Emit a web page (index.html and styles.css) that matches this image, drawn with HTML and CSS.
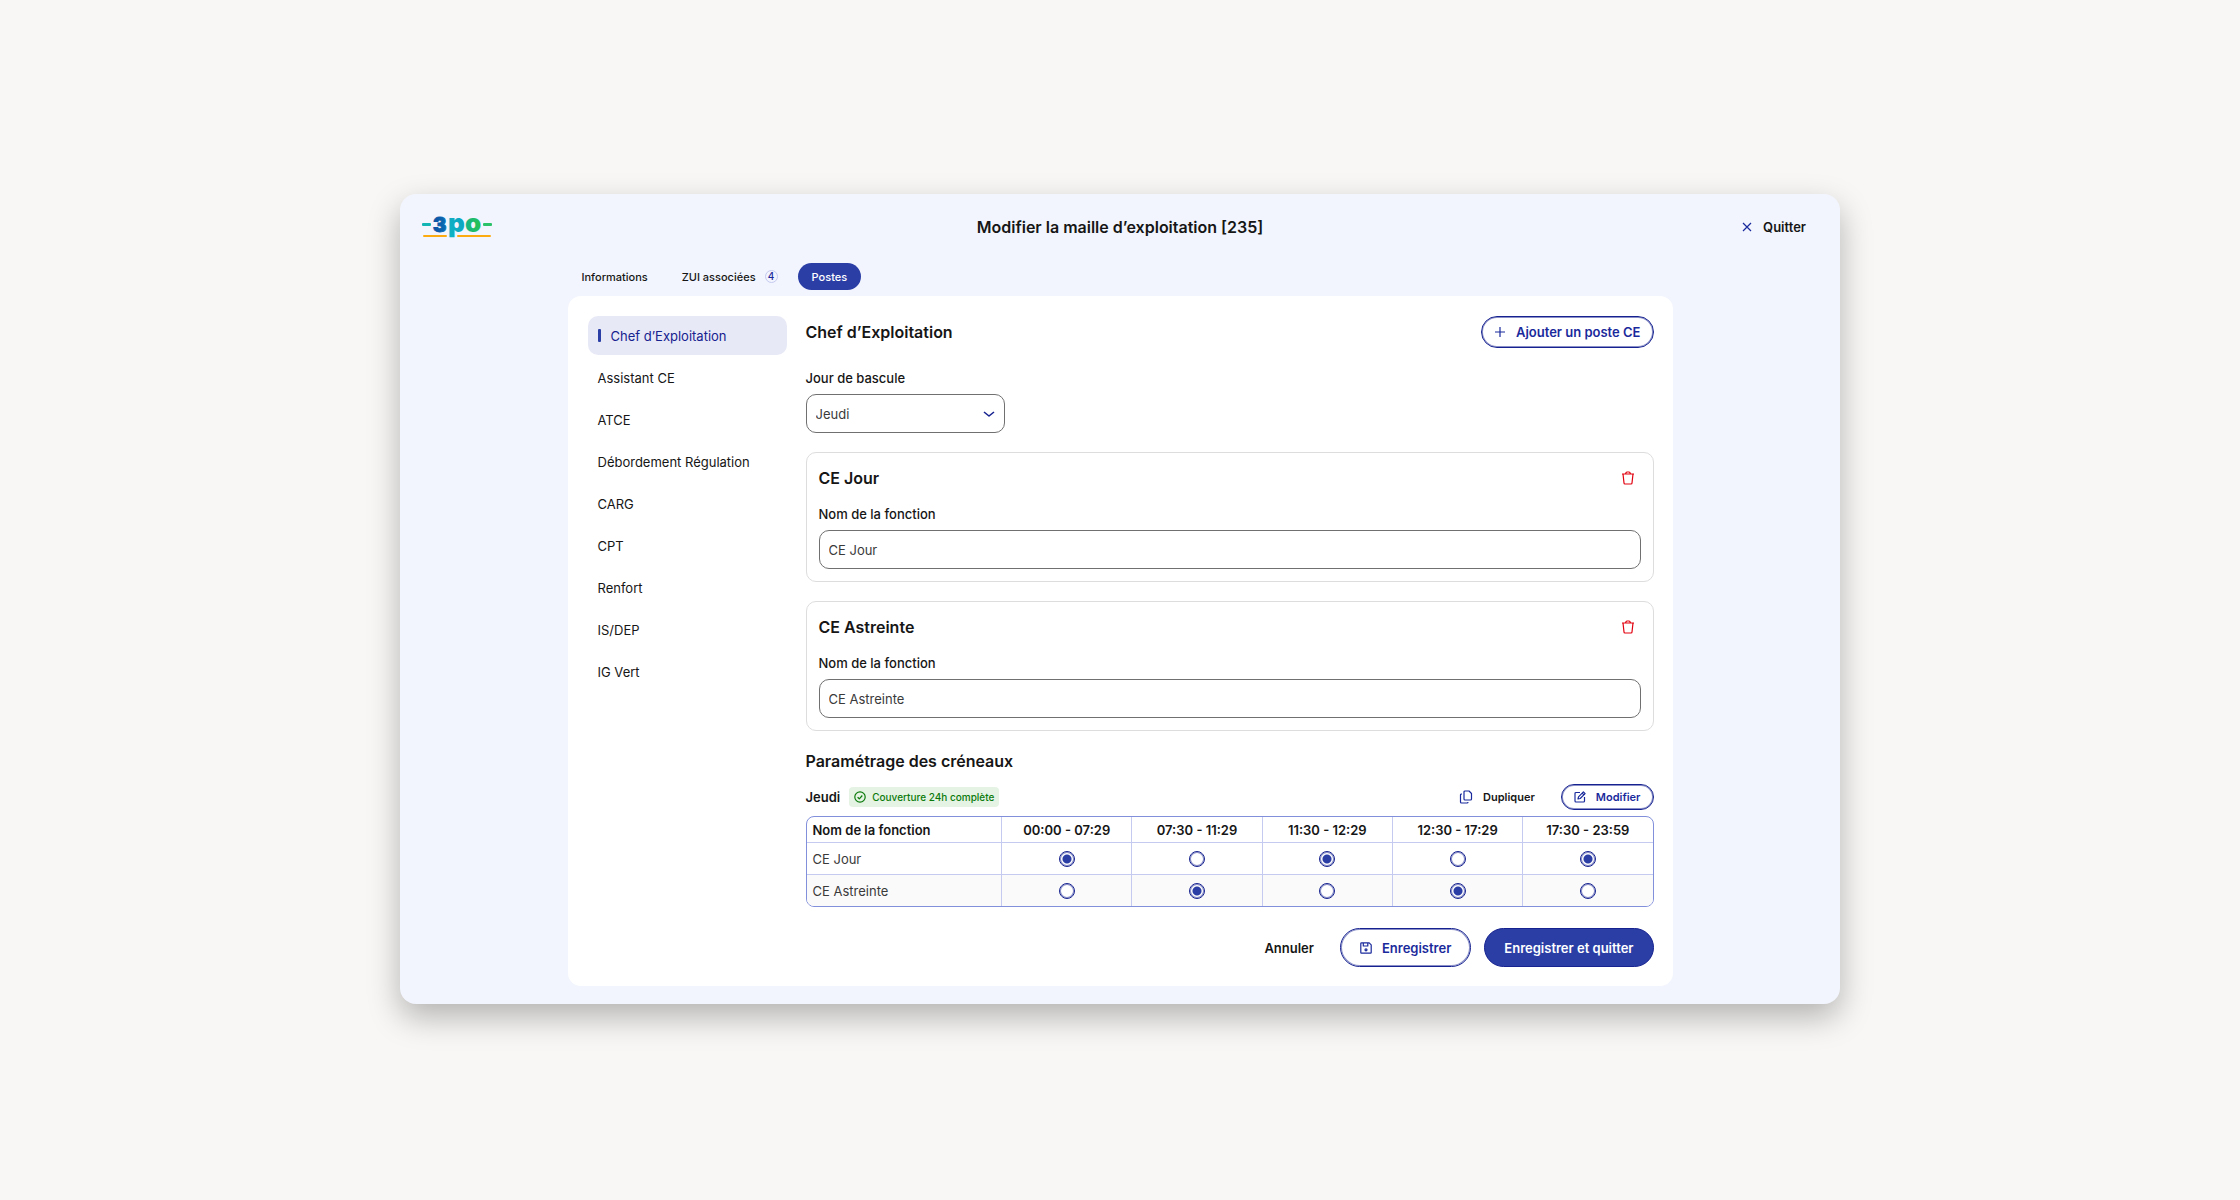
FILE: index.html
```html
<!DOCTYPE html>
<html lang="fr">
<head>
    <meta charset="UTF-8">
    <meta name="viewport" content="width=device-width, initial-scale=1.0">
    <title>Modifier la maille d’exploitation</title>
    <link rel="stylesheet" href="styles.css">
</head>
<body>
    <div class="window">
        <header class="topbar">
            <a class="logo" href="#" aria-label="3PO">
                <svg width="72" height="40" viewBox="0 -8 72 40">
                    <defs>
                        <linearGradient id="logoBlue" x1="0" x2="1" y1="0" y2="0"><stop offset="0" stop-color="#0b4da2"/><stop offset="1" stop-color="#0a6fb5"/></linearGradient>
                        <linearGradient id="logoTeal" x1="0" x2="1" y1="1" y2="0"><stop offset="0" stop-color="#12b5c4"/><stop offset="1" stop-color="#0a9fc0"/></linearGradient>
                        <linearGradient id="logoGreen" x1="0" x2="1" y1="0" y2="0"><stop offset="0" stop-color="#12b48c"/><stop offset="1" stop-color="#2bc24e"/></linearGradient>
                    </defs>
                    <rect x="1" y="8" width="9" height="3" rx="1" fill="#12b5b4"/>
                    <text class="logo-digit" x="12" y="17" fill="url(#logoBlue)" stroke="url(#logoBlue)">3</text>
                    <text class="logo-letter" x="27" y="17" fill="url(#logoTeal)">p</text>
                    <text class="logo-letter" x="44" y="17" fill="url(#logoGreen)">o</text>
                    <rect x="62" y="8" width="9" height="3" rx="1" fill="#2bc26a"/>
                    <rect x="2" y="20" width="24" height="2" rx="1" fill="#fcab10"/>
                    <rect x="36" y="20" width="34" height="2" rx="1" fill="#fcab10"/>
                </svg>
            </a>
            <h1>Modifier la maille d’exploitation [235]</h1>
            <button class="btn-text quit" type="button">
                <svg class="icon" width="12" height="12" viewBox="0 0 12 12"><path d="M2 2l8 8M10 2l-8 8"/></svg>
                Quitter
            </button>
        </header>

        <div class="content">
            <nav class="tabs">
                <a href="#">Informations</a>
                <a href="#">ZUI associées <span class="count">4</span></a>
                <a class="active" href="#">Postes</a>
            </nav>

            <div class="panel">
                <nav class="sidebar">
                    <a class="active" href="#">Chef d’Exploitation</a>
                    <a href="#">Assistant CE</a>
                    <a href="#">ATCE</a>
                    <a href="#">Débordement Régulation</a>
                    <a href="#">CARG</a>
                    <a href="#">CPT</a>
                    <a href="#">Renfort</a>
                    <a href="#">IS/DEP</a>
                    <a href="#">IG Vert</a>
                </nav>

                <main class="main">
                    <div class="main-header">
                        <h2>Chef d’Exploitation</h2>
                        <button class="btn-outline btn-add" type="button">
                            <svg class="icon" width="12" height="12" viewBox="0 0 12 12"><path d="M6 1v10M1 6h10"/></svg>
                            Ajouter un poste CE
                        </button>
                    </div>

                    <div class="field">
                        <label for="jour">Jour de bascule</label>
                        <div class="select">
                            <select id="jour">
                                <option>Lundi</option>
                                <option>Mardi</option>
                                <option>Mercredi</option>
                                <option selected>Jeudi</option>
                                <option>Vendredi</option>
                                <option>Samedi</option>
                                <option>Dimanche</option>
                            </select>
                            <svg class="icon chevron" width="12" height="12" viewBox="0 0 12 12"><path d="M1 4l5 4 5-4"/></svg>
                        </div>
                    </div>

                    <section class="card">
                        <div class="card-header">
                            <h2>CE Jour</h2>
                            <button class="btn-delete" type="button" aria-label="Supprimer CE Jour">
                                <svg class="icon" width="14" height="16" viewBox="0 0 14 16"><path d="M1 4h12M4.500 4q.5-2 1.500-2h2q1 0 1.500 2M2 4l1 9q0 1 1 1h6q1 0 1-1l1-9"/></svg>
                            </button>
                        </div>
                        <div class="field">
                            <label for="fonction-jour">Nom de la fonction</label>
                            <input id="fonction-jour" type="text" value="CE Jour">
                        </div>
                    </section>

                    <section class="card">
                        <div class="card-header">
                            <h2>CE Astreinte</h2>
                            <button class="btn-delete" type="button" aria-label="Supprimer CE Astreinte">
                                <svg class="icon" width="14" height="16" viewBox="0 0 14 16"><path d="M1 4h12M4.500 4q.5-2 1.500-2h2q1 0 1.500 2M2 4l1 9q0 1 1 1h6q1 0 1-1l1-9"/></svg>
                            </button>
                        </div>
                        <div class="field">
                            <label for="fonction-astreinte">Nom de la fonction</label>
                            <input id="fonction-astreinte" type="text" value="CE Astreinte">
                        </div>
                    </section>

                    <section class="slots">
                        <h2>Paramétrage des créneaux</h2>
                        <div class="slots-header">
                            <h3>Jeudi</h3>
                            <span class="badge">
                                <svg class="icon" width="12" height="12" viewBox="0 0 12 12"><circle cx="6" cy="6" r="5.2"/><path d="M3.600 6.200l1.700 1.600 3-3.300"/></svg>
                                Couverture 24h complète
                            </span>
                            <button class="btn-text btn-small" type="button">
                                <svg class="icon" width="14" height="14" viewBox="0 0 14 14"><path d="M6 1h4l2.500 2.500V9a1 1 0 0 1-1 1H6a1 1 0 0 1-1-1V2a1 1 0 0 1 1-1zM3 4h-.5a1 1 0 0 0-1 1v7a1 1 0 0 0 1 1H8a1 1 0 0 0 1-1"/></svg>
                                Dupliquer
                            </button>
                            <button class="btn-outline btn-small" type="button">
                                <svg class="icon" width="12" height="12" viewBox="0 0 12 12"><path d="M6 1.500H2a1 1 0 0 0-1 1V10a1 1 0 0 0 1 1h7.500a1 1 0 0 0 1-1V6M4 8l.5-2.200L9.400.9l1.700 1.700L6.200 7.500zM8.200 2.100l1.700 1.700"/></svg>
                                Modifier
                            </button>
                        </div>

                        <table class="grid">
                            <thead>
                                <tr>
                                    <th scope="col">Nom de la fonction</th>
                                    <th scope="col">00:00 - 07:29</th>
                                    <th scope="col">07:30 - 11:29</th>
                                    <th scope="col">11:30 - 12:29</th>
                                    <th scope="col">12:30 - 17:29</th>
                                    <th scope="col">17:30 - 23:59</th>
                                </tr>
                            </thead>
                            <tbody>
                                <tr>
                                    <td>CE Jour</td>
                                    <td><input type="radio" name="slot1" aria-label="CE Jour 00:00 - 07:29" checked></td>
                                    <td><input type="radio" name="slot2" aria-label="CE Jour 07:30 - 11:29"></td>
                                    <td><input type="radio" name="slot3" aria-label="CE Jour 11:30 - 12:29" checked></td>
                                    <td><input type="radio" name="slot4" aria-label="CE Jour 12:30 - 17:29"></td>
                                    <td><input type="radio" name="slot5" aria-label="CE Jour 17:30 - 23:59" checked></td>
                                </tr>
                                <tr>
                                    <td>CE Astreinte</td>
                                    <td><input type="radio" name="slot1" aria-label="CE Astreinte 00:00 - 07:29"></td>
                                    <td><input type="radio" name="slot2" aria-label="CE Astreinte 07:30 - 11:29" checked></td>
                                    <td><input type="radio" name="slot3" aria-label="CE Astreinte 11:30 - 12:29"></td>
                                    <td><input type="radio" name="slot4" aria-label="CE Astreinte 12:30 - 17:29" checked></td>
                                    <td><input type="radio" name="slot5" aria-label="CE Astreinte 17:30 - 23:59"></td>
                                </tr>
                            </tbody>
                        </table>
                    </section>

                    <div class="actions">
                        <button class="btn-text" type="button">Annuler</button>
                        <button class="btn-outline btn-large" type="button">
                            <svg class="icon" width="12" height="12" viewBox="0 0 12 12"><path d="M1.500.8h7.700l2 2v7.700a.7.7 0 0 1-.7.7h-9a.7.7 0 0 1-.7-.7v-9a.7.7 0 0 1 .7-.7zM3.300 1v3h4.500V1"/><circle cx="6" cy="7.800" r="1"/></svg>
                            Enregistrer
                        </button>
                        <button class="btn-primary btn-large" type="button">Enregistrer et quitter</button>
                    </div>
                </main>
            </div>
        </div>
    </div>
</body>
</html>
```
FILE: styles.css
```css
* {
    box-sizing: border-box;
}
body {
    font-family: Inter, "Liberation Sans", sans-serif;
    font-size: 13px;
    line-height: 16px;
    color: #161616;
    background-color: #f8f7f5;
    margin: 0;
    padding: 24px 24px 26px;
    min-height: 100vh;
    display: flex;
    align-items: center;
    justify-content: center;
}
h1, h2, h3 {
    margin: 0;
    font-size: 16px;
    line-height: 20px;
    font-weight: 600;
}
a {
    color: inherit;
    text-decoration: none;
}
button, input, select {
    font: inherit;
    color: inherit;
    margin: 0;
}
button {
    display: inline-flex;
    align-items: center;
    justify-content: center;
    cursor: pointer;
}
.icon {
    flex: none;
    fill: none;
    stroke: currentColor;
    stroke-width: 1.2;
    stroke-linejoin: round;
}
.window {
    width: 100%;
    max-width: 1440px;
    padding-bottom: 18px;
    background-color: #f2f5fd;
    border-radius: 16px;
    box-shadow: 0 13px 32px rgba(0, 0, 0, 0.28);
}

/* top bar */
.topbar {
    display: grid;
    grid-template-columns: 1fr auto 1fr;
    align-items: center;
    height: 66px;
    padding: 0 21px;
}
.logo svg {
    display: block;
}
.logo-digit, .logo-letter {
    font-weight: 900;
    font-size: 20px;
}
.logo-letter {
    font-size: 26px;
}
.btn-text {
    gap: 10px;
    padding: 0;
    border: none;
    background: none;
    font-weight: 600;
}
.btn-text .icon {
    color: #1a2a9c;
}
.quit {
    justify-self: end;
    padding-right: 13px;
}

/* tabs */
.content {
    max-width: 1105px;
    margin: 0 auto;
}
.tabs {
    display: flex;
    gap: 6px;
    margin-top: 3px;
    font-size: 11px;
    font-weight: 500;
}
.tabs a {
    display: flex;
    align-items: center;
    gap: 9px;
    height: 27px;
    padding: 0 14px;
    border-radius: 14px;
}
.tabs .active {
    background-color: #2b3ea6;
    color: #fff;
}
.count {
    width: 13px;
    height: 13px;
    line-height: 11px;
    border: 1px solid #c5caf0;
    border-radius: 50%;
    font-size: 10px;
    text-align: center;
    color: #1a2a9c;
}

/* panel */
.panel {
    display: flex;
    gap: 19px;
    margin-top: 6px;
    padding: 20px 19px 19px 20px;
    background-color: #fff;
    border-radius: 13px;
}
.sidebar {
    flex: none;
    width: 199px;
    display: flex;
    flex-direction: column;
    gap: 3px;
}
.sidebar a {
    display: flex;
    align-items: center;
    gap: 10px;
    height: 39px;
    padding: 0 10px;
    border-radius: 10px;
}
.sidebar .active {
    background-color: #e7e9f6;
    color: #16228f;
}
.sidebar .active::before {
    content: "";
    width: 3px;
    height: 13px;
    border-radius: 1px;
    background-color: #2b3ea6;
}
.main {
    flex: 1;
    min-width: 0;
}
.main-header, .card-header {
    display: flex;
    align-items: center;
    justify-content: space-between;
}
.main-header {
    margin-bottom: 22px;
}

/* buttons */
.btn-outline, .btn-primary {
    gap: 10px;
    border: 1px solid #16228f;
    border-radius: 20px;
    box-shadow: inset 0 0 0 1px rgba(22, 34, 143, 0.5);
    background-color: #fff;
    color: #1a2a9c;
    font-weight: 600;
}
.btn-primary {
    background-color: #2b3ea6;
    color: #fff;
    box-shadow: none;
}
.btn-add {
    height: 32px;
    padding: 0 12px;
}
.btn-large {
    height: 39px;
    padding: 0 19px;
}
.btn-small {
    height: 26px;
    font-size: 11px;
}
.btn-outline.btn-small {
    padding: 0 12px;
}
.btn-delete {
    width: 26px;
    height: 26px;
    padding: 0;
    border: none;
    background: none;
    color: #e1000f;
}

/* form fields */
.field label {
    display: block;
    margin-bottom: 8px;
    font-weight: 500;
}
.field input, .field select {
    display: block;
    width: 100%;
    height: 39px;
    padding: 0 9px;
    border: 1px solid #707070;
    border-radius: 10px;
    background-color: #fff;
    color: #3a3a3a;
    appearance: none;
}
.select {
    position: relative;
    width: 199px;
}
.chevron {
    position: absolute;
    right: 10px;
    top: 14px;
    color: #16228f;
    stroke-width: 1.6;
    pointer-events: none;
}
.card {
    margin-top: 19px;
    padding: 12px;
    border: 1px solid #dddddd;
    border-radius: 10px;
}
.card-header {
    margin-bottom: 15px;
}

/* time slots */
.slots {
    margin-top: 20px;
}
.slots-header {
    display: flex;
    align-items: center;
    margin: 13px 0 6px;
}
.slots-header h3 {
    font-size: 13px;
}
.slots-header .btn-text {
    margin: 0 26px 0 auto;
}
.badge {
    display: flex;
    align-items: center;
    gap: 6px;
    height: 20px;
    margin-left: 9px;
    padding: 0 5px;
    border-radius: 4px;
    background-color: #e5f3e4;
    color: #0b7a0b;
    font-size: 10px;
    font-weight: 500;
}
.grid {
    width: 100%;
    table-layout: fixed;
    border-collapse: separate;
    border-spacing: 0;
    border: 1px solid #8290dc;
    border-radius: 8px;
    overflow: hidden;
}
.grid th, .grid td {
    height: 32px;
    padding: 0;
    text-align: center;
    border-left: 1px solid #c5caf0;
}
.grid td {
    border-top: 1px solid #c5caf0;
}
.grid th {
    height: 25px;
    font-weight: 600;
}
.grid th:first-child, .grid td:first-child {
    width: 23%;
    padding-left: 6px;
    text-align: left;
    border-left: none;
}
.grid td:first-child {
    color: #3a3a3a;
}
.grid tr:last-child td {
    background-color: #fafafa;
}
.grid input {
    display: block;
    width: 16px;
    height: 16px;
    margin: 0 auto;
    appearance: none;
    border: 1px solid #16228f;
    border-radius: 50%;
    background-color: #fff;
    box-shadow: inset 0 0 0 1px rgba(22, 34, 143, 0.5);
}
.grid input:checked {
    background-image: radial-gradient(circle, #2b3ea6 4px, #fff 5px);
}
.actions {
    display: flex;
    align-items: center;
    justify-content: flex-end;
    margin-top: 21px;
}
.actions .btn-outline {
    margin: 0 13px 0 26px;
}
```
